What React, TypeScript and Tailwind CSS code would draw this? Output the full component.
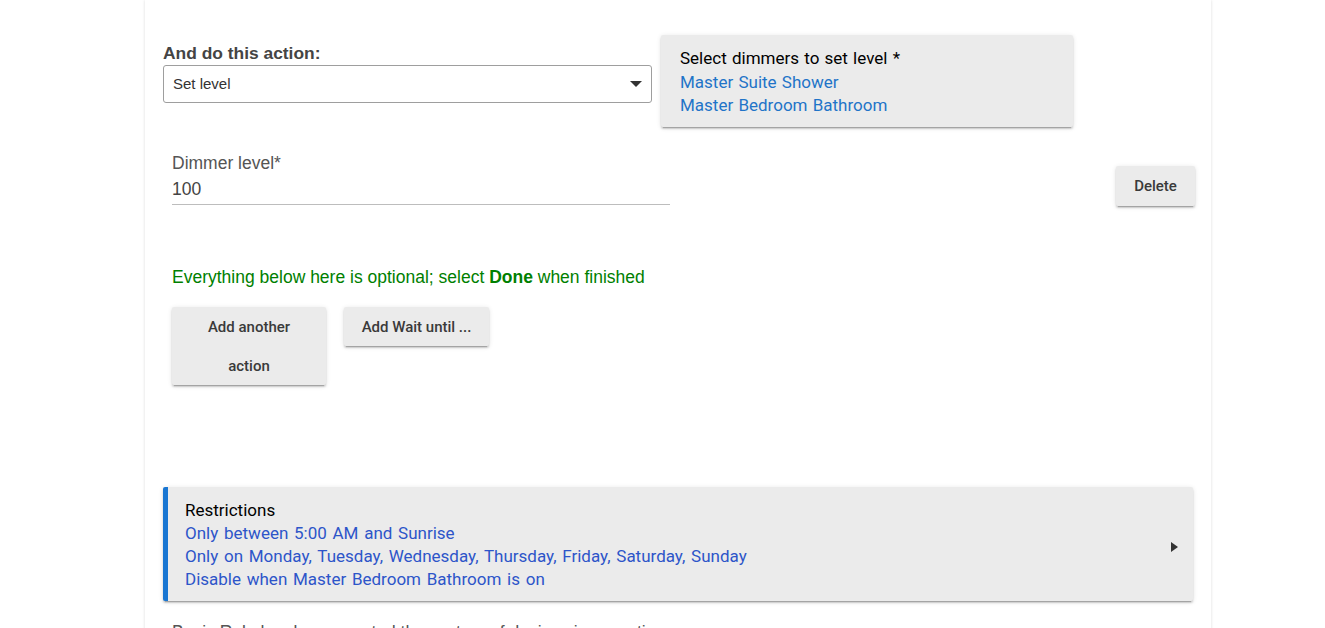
import React from 'react';

const raised =
  'bg-[#ebebeb] shadow-[0_2px_2px_rgba(0,0,0,0.14),0_3px_1px_-2px_rgba(0,0,0,0.2),0_1px_5px_rgba(0,0,0,0.12)]';

function FlatButton({ children, className = '' }: { children: React.ReactNode; className?: string }) {
  return (
    <button
      className={`${raised} rounded-[2px] font-['Roboto',sans-serif] text-[15px] font-medium text-[#3a3a3a] ${className}`}
    >
      {children}
    </button>
  );
}

export default function App() {
  const dimmers = ['Master Suite Shower', 'Master Bedroom Bathroom'];
  const restrictions = [
    'Only between 5:00 AM and Sunrise',
    'Only on Monday, Tuesday, Wednesday, Thursday, Friday, Saturday, Sunday',
    'Disable when Master Bedroom Bathroom is on',
  ];

  return (
    <div className="h-[628px] overflow-hidden bg-white">
      <div className="ml-[145px] w-[1066px] min-h-[700px] bg-white pl-[18px] pr-[16px] pt-[35px] shadow-[0_0_3px_rgba(0,0,0,0.14)] font-['Liberation_Sans',Arial,sans-serif]">
        {/* Action picker + device card */}
        <div className="flex items-start">
          <div className="w-[489px] pt-[8px]">
            <div className="text-[17.4px] leading-[20px] font-bold text-[#444]">And do this action:</div>
            <div className="mt-[2px] flex h-[38px] items-center justify-between rounded-[3px] border border-[#9e9e9e] pl-[9px] pr-[9px]">
              <span className="mt-[1px] text-[15px] text-[#333]">Set level</span>
              <span className="h-0 w-0 border-x-[6px] border-t-[6px] border-x-transparent border-t-[#333]" />
            </div>
          </div>
          <div className={`${raised} ml-[9px] h-[92px] w-[412px] rounded-[2px] pl-[19px] pt-[12px] font-['Roboto',sans-serif] text-[17px] leading-[23.5px] [word-spacing:1px]`}>
            <div className="text-black">Select dimmers to set level *</div>
            {dimmers.map((d) => (
              <div key={d} className="text-[#1f74c8]">
                {d}
              </div>
            ))}
          </div>
        </div>

        {/* Dimmer level + delete */}
        <div className="mt-[26px] flex items-start justify-between">
          <div className="ml-[9px] w-[498px] border-b border-[#bdbdbd] pb-[5px] text-[17.5px] leading-[20px] text-[#555]">
            <div>Dimmer level*</div>
            <div className="mt-[6px] text-[#444]">100</div>
          </div>
          <FlatButton className="mt-[13px] h-[40px] w-[79px]">Delete</FlatButton>
        </div>

        <p className="mt-[61px] ml-[9px] text-[17.5px] leading-[20px] text-[#008000]">
          Everything below here is optional; select <b>Done</b> when finished
        </p>

        <div className="mt-[20px] ml-[9px] flex items-start gap-[18px]">
          <FlatButton className="h-[78px] w-[154px] px-[30px] pt-[1px] leading-[39px]">Add another action</FlatButton>
          <FlatButton className="h-[39px] w-[145px] pt-[1px]">Add Wait until ...</FlatButton>
        </div>

        {/* Restrictions */}
        <div
          className={`${raised} mt-[102px] mr-[2px] flex h-[114px] items-start justify-between rounded-[2px] border-l-[5px] border-[#1976d2] pl-[17px] pr-[15px] pt-[12px] font-['Roboto',sans-serif] text-[17px] leading-[23px] [word-spacing:1.5px]`}
        >
          <div>
            <div className="text-black">Restrictions</div>
            {restrictions.map((r) => (
              <div key={r} className="text-[#2d55c9]">
                {r}
              </div>
            ))}
          </div>
          <span className="mt-[43px] h-0 w-0 border-y-[5px] border-l-[7px] border-y-transparent border-l-[#333]" />
        </div>

        <p className="mt-[21px] ml-[9px] text-[17.5px] leading-[20px] text-[#555]">
          Basic Rule has been created the system of devices in operation
        </p>
      </div>
    </div>
  );
}
